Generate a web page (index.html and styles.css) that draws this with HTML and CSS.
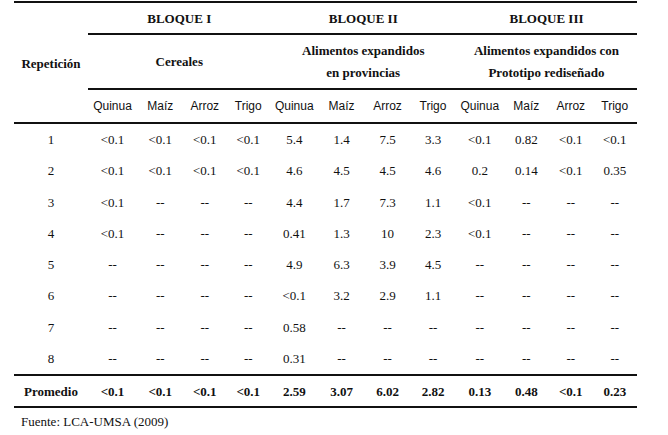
FILE: index.html
```html
<!DOCTYPE html>
<html lang="es">
<head>
<meta charset="utf-8">
<link rel="stylesheet" href="styles.css">
</head>
<body>
<div class="page">
<table class="data">
  <colgroup>
    <col class="c-rep">
    <col class="c1"><col class="c2"><col class="c3"><col class="c4">
    <col class="c5"><col class="c6"><col class="c7"><col class="c8">
    <col class="c9"><col class="c10"><col class="c11"><col class="c12">
  </colgroup>
  <thead>
    <tr class="r-bloque">
      <th rowspan="3" class="rep">Repetición</th>
      <th colspan="4" class="grp">BLOQUE I</th>
      <th colspan="4" class="grp">BLOQUE II</th>
      <th colspan="4" class="grp">BLOQUE III</th>
    </tr>
    <tr class="r-sub">
      <th colspan="4" class="grp">Cereales</th>
      <th colspan="4" class="grp">Alimentos expandidos<br>en provincias</th>
      <th colspan="4" class="grp">Alimentos expandidos con<br>Prototipo rediseñado</th>
    </tr>
    <tr class="r-cols">
      <th class="col">Quinua</th><th class="col">Maíz</th><th class="col">Arroz</th><th class="col">Trigo</th>
      <th class="col">Quinua</th><th class="col">Maíz</th><th class="col">Arroz</th><th class="col">Trigo</th>
      <th class="col">Quinua</th><th class="col">Maíz</th><th class="col">Arroz</th><th class="col">Trigo</th>
    </tr>
  </thead>
  <tbody>
    <tr><td>1</td><td>&lt;0.1</td><td>&lt;0.1</td><td>&lt;0.1</td><td>&lt;0.1</td><td>5.4</td><td>1.4</td><td>7.5</td><td>3.3</td><td>&lt;0.1</td><td>0.82</td><td>&lt;0.1</td><td>&lt;0.1</td></tr>
    <tr><td>2</td><td>&lt;0.1</td><td>&lt;0.1</td><td>&lt;0.1</td><td>&lt;0.1</td><td>4.6</td><td>4.5</td><td>4.5</td><td>4.6</td><td>0.2</td><td>0.14</td><td>&lt;0.1</td><td>0.35</td></tr>
    <tr><td>3</td><td>&lt;0.1</td><td>--</td><td>--</td><td>--</td><td>4.4</td><td>1.7</td><td>7.3</td><td>1.1</td><td>&lt;0.1</td><td>--</td><td>--</td><td>--</td></tr>
    <tr><td>4</td><td>&lt;0.1</td><td>--</td><td>--</td><td>--</td><td>0.41</td><td>1.3</td><td>10</td><td>2.3</td><td>&lt;0.1</td><td>--</td><td>--</td><td>--</td></tr>
    <tr><td>5</td><td>--</td><td>--</td><td>--</td><td>--</td><td>4.9</td><td>6.3</td><td>3.9</td><td>4.5</td><td>--</td><td>--</td><td>--</td><td>--</td></tr>
    <tr><td>6</td><td>--</td><td>--</td><td>--</td><td>--</td><td>&lt;0.1</td><td>3.2</td><td>2.9</td><td>1.1</td><td>--</td><td>--</td><td>--</td><td>--</td></tr>
    <tr><td>7</td><td>--</td><td>--</td><td>--</td><td>--</td><td>0.58</td><td>--</td><td>--</td><td>--</td><td>--</td><td>--</td><td>--</td><td>--</td></tr>
    <tr><td>8</td><td>--</td><td>--</td><td>--</td><td>--</td><td>0.31</td><td>--</td><td>--</td><td>--</td><td>--</td><td>--</td><td>--</td><td>--</td></tr>
  </tbody>
  <tfoot>
    <tr class="r-avg"><td>Promedio</td><td>&lt;0.1</td><td>&lt;0.1</td><td>&lt;0.1</td><td>&lt;0.1</td><td>2.59</td><td>3.07</td><td>6.02</td><td>2.82</td><td>0.13</td><td>0.48</td><td>&lt;0.1</td><td>0.23</td></tr>
  </tfoot>
</table>
<p class="source">Fuente: LCA-UMSA (2009)</p>
</div>
</body>
</html>
```

FILE: styles.css
```css
html, body {
  margin: 0;
  padding: 0;
  background: #fff;
}

.page {
  padding: 1px 0 0 14px;
  color: #111;
  font-family: "Liberation Serif", "Times New Roman", serif;
  font-size: 13px;
}

.data {
  border-collapse: separate;
  border-spacing: 0;
  table-layout: fixed;
  width: 623px;
}

.c-rep { width: 74px; }
.c1 { width: 49px; }
.c2 { width: 46.5px; }
.c3 { width: 42.5px; }
.c4 { width: 44.5px; }
.c5 { width: 47.5px; }
.c6 { width: 47px; }
.c7 { width: 45px; }
.c8 { width: 46px; }
.c9 { width: 47.5px; }
.c10 { width: 45.5px; }
.c11 { width: 43.5px; }
.c12 { width: 44.5px; }

.data th,
.data td {
  box-sizing: border-box;
  padding: 0;
  text-align: center;
  vertical-align: middle;
  line-height: 15px;
}

.data th {
  font-weight: bold;
}

.r-bloque th {
  border-top: 2px solid #111;
  height: 34px;
}

.r-bloque .grp,
.r-sub .grp {
  border-bottom: 2px solid #111;
}

.r-sub th {
  height: 55px;
  line-height: 22px;
}

.r-cols th {
  height: 34px;
  border-bottom: 2px solid #111;
}

.data th.col {
  font-family: "Liberation Sans", Arial, sans-serif;
  font-weight: normal;
  font-size: 12px;
}

.data th.rep {
  border-bottom: 2px solid #111;
  padding-top: 1px;
}

tbody td {
  height: 31.25px;
}

.r-avg td {
  height: 34px;
  font-weight: bold;
  border-top: 2px solid #111;
  border-bottom: 2px solid #111;
}

.source {
  margin: 6px 0 0 7px;
  line-height: 15px;
}
```
